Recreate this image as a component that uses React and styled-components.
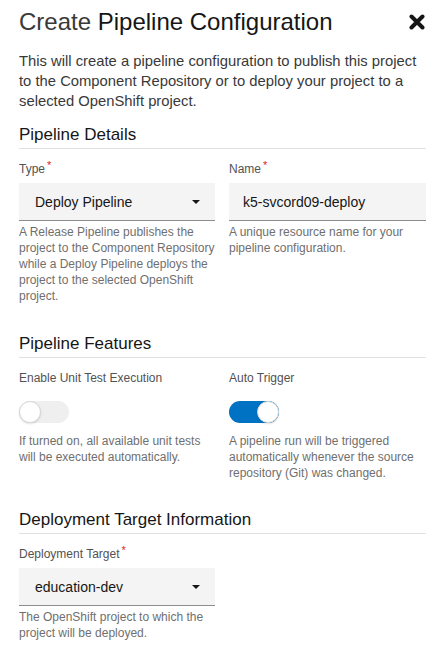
import styled, { createGlobalStyle } from 'styled-components';

const GlobalStyle = createGlobalStyle`
  body {
    margin: 0;
    background: #ffffff;
    font-family: "Liberation Sans", Arial, sans-serif;
    color: #161616;
  }
`;

const Page = styled.div`
  width: 446px;
  box-sizing: border-box;
  padding: 0 20px 0 19px;
`;

const Header = styled.div`
  display: flex;
  justify-content: space-between;
  align-items: center;
  height: 44px;
`;

const Title = styled.h1`
  margin: 0;
  font-size: 24px;
  font-weight: 400;
  color: #161616;
  span {
    font-weight: 300;
    color: #393939;
  }
`;

const CloseButton = styled.button`
  border: none;
  background: none;
  padding: 0;
  margin-right: 1px;
  cursor: pointer;
  display: flex;
  svg {
    width: 16px;
    height: 16px;
  }
`;

const Intro = styled.p`
  margin: 7px 0 0;
  font-size: 14.8px;
  line-height: 20px;
  color: #393939;
`;

const Section = styled.section`
  margin-top: ${(p) => p.gap || 13}px;
`;

const SectionTitle = styled.h2`
  margin: 0;
  font-size: 17px;
  font-weight: 400;
  line-height: 22px;
  padding-bottom: 2px;
  border-bottom: 1px solid #e0e0e0;
  color: #161616;
`;

const Grid = styled.div`
  display: grid;
  grid-template-columns: 196px 197px;
  column-gap: 14px;
  margin-top: 12px;
`;

const Field = styled.div`
  display: flex;
  flex-direction: column;
`;

const Label = styled.label`
  font-size: 12px;
  line-height: 16px;
  color: #525252;
  height: 16px;
`;

const Required = styled.sup`
  color: #da1e28;
  font-size: 11px;
  margin-left: 2px;
  vertical-align: 4px;
  line-height: 0;
`;

const Control = styled.div`
  margin-top: 6px;
  height: 37px;
  background: #f4f4f4;
  border-bottom: 1px solid #8d8d8d;
  display: flex;
  align-items: center;
  justify-content: space-between;
  padding: 0 15px 0 ${(p) => p.indent || 16}px;
  font-size: 14px;
  color: #161616;
`;

const Caret = styled.span`
  width: 0;
  height: 0;
  border-left: 4px solid transparent;
  border-right: 4px solid transparent;
  border-top: 4px solid #161616;
`;

const Helper = styled.div`
  margin-top: ${(p) => p.top || 3}px;
  font-size: 12px;
  line-height: 16px;
  color: #6f6f6f;
`;

const Toggle = styled.div`
  position: relative;
  margin-top: 15px;
  width: 50px;
  height: 22px;
  border-radius: 11px;
  background: ${(p) => (p.on ? '#0072c3' : '#efefef')};
  &::after {
    content: '';
    position: absolute;
    top: 0;
    left: ${(p) => (p.on ? '28px' : '0')};
    width: 20px;
    height: 20px;
    border-radius: 50%;
    background: #ffffff;
    border: 1px solid #d8d8d8;
    box-shadow: 0 1px 2px rgba(0, 0, 0, 0.12);
  }
`;

function Select({ value }) {
  return (
    <Control>
      {value}
      <Caret />
    </Control>
  );
}

function App() {
  return (
    <Page>
      <GlobalStyle />
      <Header>
        <Title><span>Create</span> Pipeline Configuration</Title>
        <CloseButton aria-label="Close">
          <svg viewBox="0 0 16 16">
            <path d="M2.5 2.5 L13.5 13.5 M13.5 2.5 L2.5 13.5" stroke="#161616" strokeWidth="4" strokeLinecap="round" fill="none" />
          </svg>
        </CloseButton>
      </Header>
      <Intro>
        This will create a pipeline configuration to publish this project to the Component Repository or to deploy your project to a selected OpenShift project.
      </Intro>

      <Section>
        <SectionTitle>Pipeline Details</SectionTitle>
        <Grid>
          <Field>
            <Label>Type<Required>*</Required></Label>
            <Select value="Deploy Pipeline" />
            <Helper>
              A Release Pipeline publishes the project to the Component Repository while a Deploy Pipeline deploys the project to the selected OpenShift project.
            </Helper>
          </Field>
          <Field>
            <Label>Name<Required>*</Required></Label>
            <Control indent={14}>k5-svcord09-deploy</Control>
            <Helper>A unique resource name for your pipeline configuration.</Helper>
          </Field>
        </Grid>
      </Section>

      <Section gap={29}>
        <SectionTitle>Pipeline Features</SectionTitle>
        <Grid>
          <Field>
            <Label>Enable Unit Test Execution</Label>
            <Toggle />
            <Helper top={10}>If turned on, all available unit tests will be executed automatically.</Helper>
          </Field>
          <Field>
            <Label>Auto Trigger</Label>
            <Toggle on />
            <Helper top={10}>
              A pipeline run will be triggered automatically whenever the source repository (Git) was changed.
            </Helper>
          </Field>
        </Grid>
      </Section>

      <Section gap={28}>
        <SectionTitle>Deployment Target Information</SectionTitle>
        <Grid>
          <Field>
            <Label>Deployment Target<Required>*</Required></Label>
            <Select value="education-dev" />
            <Helper>The OpenShift project to which the project will be deployed.</Helper>
          </Field>
        </Grid>
      </Section>
    </Page>
  );
}

export default App;
